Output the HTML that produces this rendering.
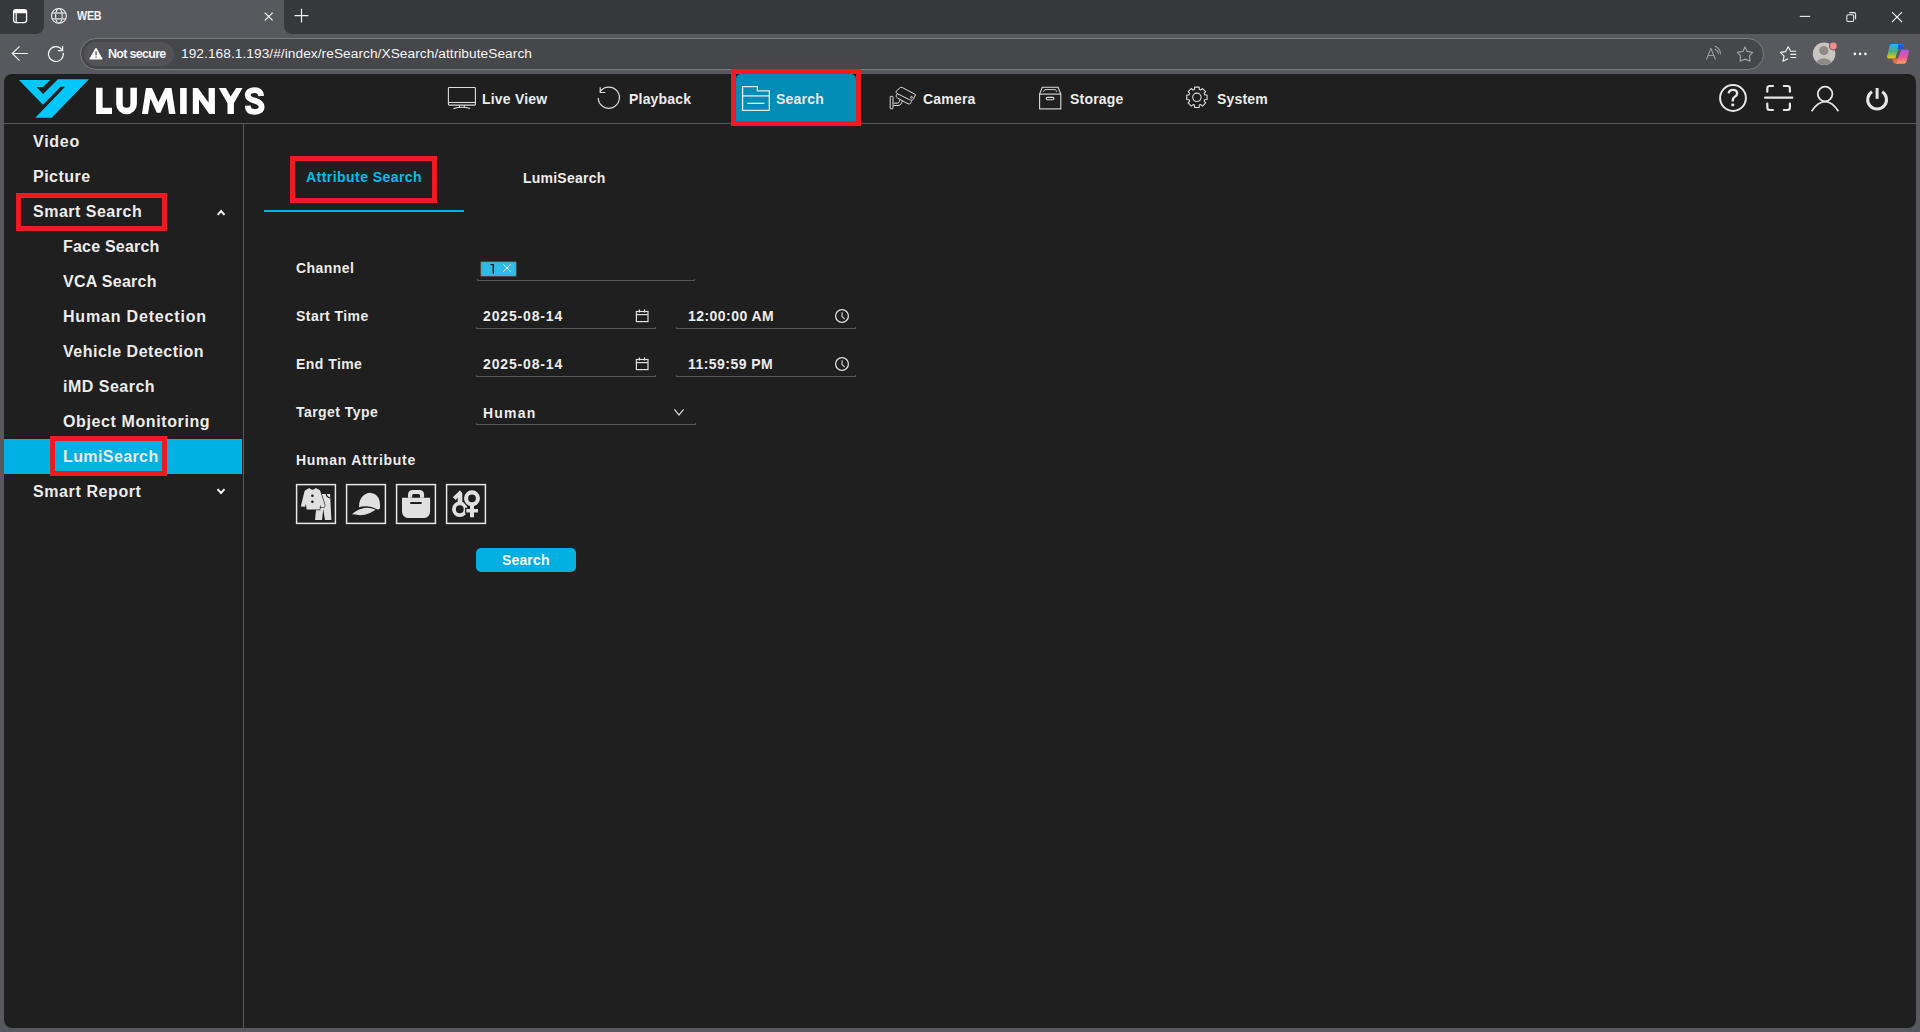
<!DOCTYPE html>
<html><head><meta charset="utf-8">
<style>
html,body{margin:0;padding:0;width:1920px;height:1032px;overflow:hidden;background:#58595e;font-family:"Liberation Sans",sans-serif;}
.a{position:absolute;}
.t{position:absolute;white-space:nowrap;line-height:1;}
.nav{font-weight:bold;font-size:14px;color:#ececec;letter-spacing:0.2px;}
.side{font-weight:bold;font-size:16px;color:#ececec;letter-spacing:0.5px;}
.lbl{font-weight:bold;font-size:14px;color:#ececec;letter-spacing:0.45px;}
.red{position:absolute;border:5px solid #ed1c24;box-sizing:border-box;}
.uline{position:absolute;height:1px;box-sizing:content-box;border:1px solid #57585b;border-top:none;border-radius:0 0 1px 1px;}
</style></head>
<body>
<!-- browser chrome -->
<div class="a" style="left:0;top:0;width:44px;height:34px;background:#37383c;border-bottom-right-radius:8px"></div>
<div class="a" style="left:284px;top:0;width:1636px;height:34px;background:#37383c;border-bottom-left-radius:8px"></div>
<div class="a" style="left:44px;top:0;width:240px;height:34px;background:#58595e;border-radius:8px 8px 0 0"></div>
<div class="t" style="left:77px;top:10px;font-size:12.5px;font-weight:bold;color:#f0f0f0;letter-spacing:-0.3px;transform:scaleX(0.86);transform-origin:0 0">WEB</div>
<!-- address bar -->
<div class="a" style="left:80px;top:38px;width:1684px;height:32px;box-sizing:border-box;background:#46474b;border:1px solid #7a7b7f;border-radius:16px"></div>
<div class="a" style="left:84px;top:42px;width:90px;height:24px;background:#525257;border-radius:12px"></div>
<div class="t" style="left:108px;top:48px;font-size:12.5px;font-weight:bold;color:#f4f4f4;letter-spacing:-0.7px">Not secure</div>
<div class="t" style="left:181px;top:47px;font-size:13.7px;color:#f4f4f4;letter-spacing:0.06px">192.168.1.193/#/index/reSearch/XSearch/attributeSearch</div>
<!-- content window -->
<div class="a" style="left:4px;top:74px;width:1912px;height:954px;background:#1f1f1f;border-radius:8px"></div>
<!-- header line & sidebar line -->
<div class="a" style="left:4px;top:123px;width:1912px;height:1px;background:#57585b"></div>
<div class="a" style="left:243px;top:124px;width:1px;height:904px;background:#57585b"></div>

<!-- active nav bg -->
<div class="a" style="left:736px;top:74px;width:120px;height:47px;background:#018db5;border-radius:5px 5px 0 0"></div>
<div class="red" style="left:731px;top:69px;width:130px;height:57px"></div>

<!-- nav texts -->
<div class="t nav" style="left:482px;top:92px">Live View</div>
<div class="t nav" style="left:629px;top:92px">Playback</div>
<div class="t nav" style="left:776px;top:92px">Search</div>
<div class="t nav" style="left:923px;top:92px">Camera</div>
<div class="t nav" style="left:1070px;top:92px">Storage</div>
<div class="t nav" style="left:1217px;top:92px">System</div>
<!-- LUMINYS -->

<!-- sidebar -->
<div class="t side" style="left:33px;top:134px;letter-spacing:0.75px">Video</div>
<div class="t side" style="left:33px;top:169px">Picture</div>
<div class="t side" style="left:33px;top:204px">Smart Search</div>
<div class="t side" style="left:63px;top:239px;letter-spacing:0.2px">Face Search</div>
<div class="t side" style="left:63px;top:274px;letter-spacing:0.28px">VCA Search</div>
<div class="t side" style="left:63px;top:309px;letter-spacing:0.82px">Human Detection</div>
<div class="t side" style="left:63px;top:344px">Vehicle Detection</div>
<div class="t side" style="left:63px;top:379px">iMD Search</div>
<div class="t side" style="left:63px;top:414px;letter-spacing:0.61px">Object Monitoring</div>
<div class="a" style="left:4px;top:439px;width:238px;height:35px;background:#00b2e3"></div>
<div class="t side" style="left:63px;top:449px;letter-spacing:0.4px">LumiSearch</div>
<div class="t side" style="left:33px;top:484px;letter-spacing:0.6px">Smart Report</div>
<div class="red" style="left:16px;top:193px;width:151px;height:38px"></div>
<div class="red" style="left:50px;top:436px;width:117px;height:40px"></div>

<!-- tabs -->
<div class="t lbl" style="left:306px;top:170px;color:#00bdee">Attribute Search</div>
<div class="t lbl" style="left:523px;top:171px;letter-spacing:0.23px">LumiSearch</div>
<div class="a" style="left:264px;top:210px;width:200px;height:2px;background:#00b2e3"></div>
<div class="red" style="left:290px;top:156px;width:147px;height:47px"></div>

<!-- form -->
<div class="t lbl" style="left:296px;top:261px">Channel</div>
<div class="t lbl" style="left:296px;top:309px">Start Time</div>
<div class="t lbl" style="left:296px;top:357px">End Time</div>
<div class="t lbl" style="left:296px;top:405px">Target Type</div>
<div class="t lbl" style="left:296px;top:453px;letter-spacing:0.72px">Human Attribute</div>

<div class="uline" style="left:477px;top:279px;width:216px"></div>
<div class="uline" style="left:476px;top:327px;width:178px"></div>
<div class="uline" style="left:676px;top:327px;width:178px"></div>
<div class="uline" style="left:476px;top:375px;width:178px"></div>
<div class="uline" style="left:676px;top:375px;width:178px"></div>
<div class="uline" style="left:476px;top:423px;width:218px"></div>


<div class="t lbl" style="left:483px;top:309px;letter-spacing:0.84px">2025-08-14</div>
<div class="t lbl" style="left:688px;top:309px">12:00:00 AM</div>
<div class="t lbl" style="left:483px;top:357px;letter-spacing:0.84px">2025-08-14</div>
<div class="t lbl" style="left:688px;top:357px">11:59:59 PM</div>
<div class="t lbl" style="left:483px;top:406px;letter-spacing:1.2px">Human</div>

<div class="a" style="left:476px;top:548px;width:100px;height:24px;background:#00b0e0;border-radius:5px"></div>
<div class="t lbl" style="left:502px;top:553px;color:#fff;letter-spacing:0.15px">Search</div>
<svg class="a" style="left:0;top:0" width="1920" height="1032" viewBox="0 0 1920 1032">
<!-- ===== browser chrome icons ===== -->
<!-- sidebar toggle -->
<rect x="13.6" y="9.6" width="13" height="13" rx="2.5" fill="none" stroke="#fff" stroke-width="1.3"/>
<rect x="13.6" y="9.6" width="13" height="3.6" rx="1.5" fill="#fff"/>
<line x1="16.2" y1="12" x2="16.2" y2="22.6" stroke="#fff" stroke-width="1.2"/>
<!-- globe -->
<g fill="none" stroke="#f0f0f0" stroke-width="1.1">
<circle cx="58.9" cy="15.9" r="7.4"/>
<ellipse cx="58.9" cy="15.9" rx="3.3" ry="7.4"/>
<line x1="51.6" y1="12.95" x2="66.2" y2="12.95" stroke="#c8c8c8" stroke-width="1.6"/>
<line x1="51.6" y1="18.9" x2="66.2" y2="18.9" stroke="#c8c8c8" stroke-width="1.6"/>
</g>
<!-- tab close -->
<path d="M264.8 12.8 L272.6 20.4 M272.6 12.8 L264.8 20.4" stroke="#f0f0f0" stroke-width="1.2"/>
<!-- new tab + -->
<path d="M301.5 8.8 V22.6 M294.6 15.7 H308.4" stroke="#f0f0f0" stroke-width="1.2"/>
<!-- window controls -->
<line x1="1799.8" y1="16.4" x2="1810.2" y2="16.4" stroke="#f0f0f0" stroke-width="1.1"/>
<rect x="1846.8" y="14.8" width="6.9" height="6.7" rx="1.2" fill="none" stroke="#f0f0f0" stroke-width="1.05"/>
<path d="M1849.2 12.6 H1854 Q1855.6 12.6 1855.6 14.2 V19.2" fill="none" stroke="#f0f0f0" stroke-width="1.05"/>
<path d="M1892 12.2 L1902 22 M1902 12.2 L1892 22" stroke="#f0f0f0" stroke-width="1.1"/>
<!-- back arrow -->
<path d="M27.9 53.5 H12.5 M19.5 46.3 L12.3 53.5 L19.5 60.7" fill="none" stroke="#f2f2f2" stroke-width="1.2"/>
<!-- refresh -->
<path d="M61.8 49.6 A7.4 7.4 0 1 0 63.2 52.8" fill="none" stroke="#f2f2f2" stroke-width="1.2"/>
<path d="M57.9 50.6 H62.6 V45.9" fill="none" stroke="#f2f2f2" stroke-width="1.2"/>
<!-- warning triangle -->
<path d="M96 48.2 L102.2 59 H89.8 Z" fill="#fff" stroke="#fff" stroke-width="1" stroke-linejoin="round"/>
<rect x="95.4" y="51.3" width="1.3" height="4" fill="#525257"/>
<rect x="95.4" y="56.4" width="1.3" height="1.3" fill="#525257"/>
<!-- read aloud A -->
<path d="M1706.4 59.6 L1710.9 48.4 L1715.5 59.6 M1708 55.5 H1713.9" fill="none" stroke="#a0a0a4" stroke-width="1.1" stroke-linejoin="round"/>
<path d="M1715.2 49.3 Q1717.9 50.8 1718.4 53.4 M1715.4 46.3 Q1720 48.6 1720.6 54" fill="none" stroke="#a0a0a4" stroke-width="1.1" stroke-linecap="round"/>
<!-- star -->
<path d="M1745 46.9 L1747.2 51.4 L1752.6 52.4 L1749.4 55.9 L1750 61.1 L1745 59.1 L1740.1 61.1 L1740.6 55.9 L1737.4 52.4 L1742.8 51.4 Z" fill="none" stroke="#a0a0a4" stroke-width="1.15" stroke-linejoin="round"/>
<!-- favorites star with lines -->
<path d="M1796.2 51.3 H1790.7 L1788.1 46.8 L1785.6 51.6 L1780.4 52.4 L1784.1 56.1 L1782.9 61.3 L1788.1 58.8" fill="none" stroke="#f2f2f2" stroke-width="1.1" stroke-linejoin="round"/>
<path d="M1790.4 54.4 H1796.2 M1790.4 57.5 H1796.2" stroke="#f2f2f2" stroke-width="1.1"/>
<!-- profile avatar -->
<circle cx="1824.1" cy="53.7" r="11.3" fill="#c9c6c2"/>
<clipPath id="avc"><circle cx="1824.1" cy="53.7" r="11.3"/></clipPath>
<g clip-path="url(#avc)" fill="#8e8a86">
<circle cx="1823.9" cy="50.6" r="4.6"/>
<ellipse cx="1823.9" cy="65.5" rx="8.2" ry="7.3"/>
</g>
<circle cx="1833.3" cy="46" r="4.4" fill="#58595e"/>
<circle cx="1833.3" cy="46" r="3.4" fill="#f38d8d"/>
<!-- more dots -->
<circle cx="1854.9" cy="53.9" r="1.3" fill="#f2f2f2"/>
<circle cx="1860.1" cy="53.9" r="1.3" fill="#f2f2f2"/>
<circle cx="1865.4" cy="53.9" r="1.3" fill="#f2f2f2"/>
<!-- copilot -->
<defs>
<linearGradient id="cpA" x1="0" y1="0" x2="0" y2="1"><stop offset="0" stop-color="#26b6f6"/><stop offset="0.5" stop-color="#48ac82"/><stop offset="1" stop-color="#f0cc12"/></linearGradient>
<linearGradient id="cpB" x1="0" y1="0" x2="0" y2="1"><stop offset="0" stop-color="#b052e6"/><stop offset="0.55" stop-color="#ea5a94"/><stop offset="1" stop-color="#fca456"/></linearGradient>
</defs>
<path d="M1891.5 44 H1902 Q1903.6 44 1904.2 49.3 H1898.2 L1895.2 58.5 H1888.6 Q1886.8 58.5 1887.1 56.5 L1889.6 46 Q1890.1 44 1891.5 44 Z" fill="url(#cpA)"/>
<path d="M1898.2 44.2 H1902 Q1903.6 44.2 1904.2 49.3 H1897.6 Z" fill="#1f55d6"/>
<path d="M1892.2 58.4 H1898.4 L1895.6 63.8 Q1893 63.8 1892.2 58.4 Z" fill="#f0663a"/>
<path d="M1901.2 49.8 H1907.6 Q1909.3 49.8 1909 51.8 L1906.3 62 Q1905.9 63.8 1904.2 63.8 H1895.9 Z" fill="url(#cpB)"/>
<!-- ===== app icons ===== -->
<!-- logo -->
<polygon fill="#00c8fd" points="18.9,80.1 50.1,80.1 42.9,86.9 36.4,87.1 43.1,93.9 57.9,79.3 88.9,79.3 51.6,117.8 35.3,117.8 46.6,106.1 65.1,86.7 60.6,86.7 42.9,104.8"/>

<!-- LUMINYS -->
<g fill="#ffffff">
<polygon points="96.1,87.8 102.6,87.8 102.6,107.8 112,107.8 112,114 96.1,114"/>
<path d="M119.45 87.8 V103.9 A7.1 7.1 0 0 0 133.65 103.9 V87.8" fill="none" stroke="#fff" stroke-width="6.5"/>
<polygon points="141.96,114 145.9,88 152,88 158.4,102.3 165.1,88 171.5,88 175.5,114 169,114 166.75,98.4 160.5,112.75 156.75,112.75 150.5,98.4 148,114"/>
<rect x="180.1" y="88" width="6.6" height="26"/>
<polygon points="192.8,114 192.8,88 198,88 208.6,102.75 208.6,88 214.9,88 214.9,114 209.25,114 199,99.6 199,114"/>
<polygon points="218.8,88 225.9,88 230.65,96.4 236.1,88 242.5,88 233.9,103.3 233.9,114 227.5,114 227.5,103.3"/>
<path d="M261.2 96 C260.8 91.8 258.3 90.1 254.6 90.1 C250.6 90.1 247.8 92 247.8 95.2 C247.8 98.6 250.8 99.6 254.6 100.6 C258.6 101.7 261.6 103.2 261.6 107 C261.6 110.3 258.6 111.9 254.6 111.9 C250.4 111.9 247.9 110 247.7 105.6" fill="none" stroke="#fff" stroke-width="5.8"/>
</g>
<!-- live view monitor -->
<g fill="none" stroke="#dcdcdc" stroke-width="1.1">
<rect x="448.4" y="87.5" width="27" height="17.6" rx="0.8"/>
<line x1="448.4" y1="102.5" x2="475.4" y2="102.5"/>
<path d="M459.5 105.5 V107.4 M464.3 105.5 V107.4"/>
<path d="M453.5 108.6 Q461.9 106 470.2 108.6"/>
</g>
<!-- playback -->
<path d="M600.1 91.6 A10.6 10.6 0 1 1 598.2 98" fill="none" stroke="#dcdcdc" stroke-width="1.2"/>
<path d="M600.2 87.2 V92.5 H605.3" fill="none" stroke="#dcdcdc" stroke-width="1.2"/>
<!-- search folder -->
<g fill="none" stroke="#e6e6e6" stroke-width="1.35">
<path d="M742.6 86.6 H757.3 V90.9 H769.3 V110.3 H742.6 Z"/>
<line x1="742.6" y1="95.9" x2="769.3" y2="95.9"/>
<line x1="747.2" y1="103.3" x2="764.4" y2="103.3"/>
</g>
<!-- camera -->
<g fill="none" stroke="#dcdcdc" stroke-width="1">
<path d="M899.2 88.5 Q900.5 86.5 902.5 87.6 L915.5 94.6 L913.5 99 Q912.5 101 910.5 100.2 L897 93.5 Q895.5 92.5 896.4 91 Z"/>
<path d="M897.3 93.6 L896.3 95.3 Q895.5 97 897.5 98 L908 103.8 Q910 104.6 910.9 102.8 L911.6 101.3"/>
<path d="M900.2 99.2 L899.2 101.8 Q898.6 103.2 897 103.2 H893.6 M902.5 100.6 L901.5 103.2 Q900.5 105.5 898 105.5 H893.6"/>
<rect x="890.2" y="96.3" width="2.8" height="12.5" rx="0.8"/>
<circle cx="911.5" cy="97.3" r="0.9"/>
</g>
<!-- storage box -->
<g fill="none" stroke="#dcdcdc" stroke-width="1.1">
<path d="M1039.6 94.1 L1042.3 87.3 H1058.1 L1060.8 94.1"/>
<rect x="1039.6" y="94.1" width="21.2" height="14.8"/>
<path d="M1043.5 91.8 L1044.8 89.6 H1055.6 L1056.9 91.8" stroke-width="0.9"/>
<rect x="1046.2" y="97.4" width="7.8" height="2.4" rx="1.2"/>
</g>
<!-- gear -->
<path fill="none" stroke="#dcdcdc" stroke-width="1.1" stroke-linejoin="round" d="M1204.73 94.88 L1207.05 95.03 L1207.05 99.57 L1204.73 99.72 L1204.15 101.13 L1205.68 102.87 L1202.47 106.08 L1200.73 104.55 L1199.32 105.13 L1199.17 107.45 L1194.63 107.45 L1194.48 105.13 L1193.07 104.55 L1191.33 106.08 L1188.12 102.87 L1189.65 101.13 L1189.07 99.72 L1186.75 99.57 L1186.75 95.03 L1189.07 94.88 L1189.65 93.47 L1188.12 91.73 L1191.33 88.52 L1193.07 90.05 L1194.48 89.47 L1194.63 87.15 L1199.17 87.15 L1199.32 89.47 L1200.73 90.05 L1202.47 88.52 L1205.68 91.73 L1204.15 93.47 Z"/>
<circle cx="1196.9" cy="97.3" r="4.2" fill="none" stroke="#dcdcdc" stroke-width="1.1"/>

<!-- help -->
<circle cx="1733" cy="98" r="12.9" fill="none" stroke="#e6e6e6" stroke-width="2"/>
<path d="M1728.8 93.4 Q1729 89.9 1733 89.9 Q1737.1 89.9 1737.1 93.4 Q1737.1 95.6 1734.8 96.8 Q1732.7 98 1732.7 100.4 V101.6" fill="none" stroke="#e6e6e6" stroke-width="2.4"/>
<rect x="1731.3" y="103.6" width="2.9" height="2.6" fill="#e6e6e6"/>
<!-- scan -->
<g fill="none" stroke="#e6e6e6" stroke-width="2.2" stroke-linecap="round">
<path d="M1767.3 91.7 V88.4 Q1767.3 86 1769.7 86 H1773"/>
<path d="M1783.8 86 H1787.5 Q1789.9 86 1789.9 88.4 V91.7"/>
<path d="M1767.3 103.7 V107.6 Q1767.3 110 1769.7 110 H1773"/>
<path d="M1783.8 110 H1787.5 Q1789.9 110 1789.9 107.6 V103.7"/>
<path d="M1765 97.7 H1792.3"/>
</g>
<!-- user -->
<circle cx="1825.1" cy="94" r="7.3" fill="none" stroke="#e6e6e6" stroke-width="1.8"/>
<path d="M1811.6 111.2 Q1818 101.6 1825.1 101.6 Q1832.2 101.6 1838.4 111.2" fill="none" stroke="#e6e6e6" stroke-width="1.8"/>
<!-- power -->
<path d="M1872 91.8 A9.4 9.4 0 1 0 1882.2 91.8" fill="none" stroke="#e6e6e6" stroke-width="3"/>
<line x1="1877.1" y1="88" x2="1877.1" y2="98.8" stroke="#e6e6e6" stroke-width="3"/>

<!-- sidebar chevrons -->
<path d="M217.7 214.9 L221.1 211 L224.5 214.9" fill="none" stroke="#f4f4f4" stroke-width="2"/>
<path d="M217.5 489.1 L221 493 L224.5 489.1" fill="none" stroke="#f4f4f4" stroke-width="2"/>

<!-- channel tag -->
<rect x="480.9" y="261.9" width="35.2" height="14.2" fill="#2ebce6" stroke="#806e6a" stroke-width="0.6"/>
<path d="M503.2 264.2 L510.8 271.8 M510.8 264.2 L503.2 271.8" stroke="#f6ecea" stroke-width="1"/>
<path d="M493.3 273.8 V264.6 H490.4" fill="none" stroke="#141414" stroke-width="1.45"/>

<!-- calendar icons -->
<g fill="none" stroke="#e0e0e0" stroke-width="1.2">
<rect x="636.4" y="311.5" width="11.6" height="10.1"/>
<line x1="636.4" y1="314.6" x2="648" y2="314.6"/>
<path d="M639.4 309.4 V312.6 M644.5 309.4 V312.6"/>
<rect x="636.4" y="359.5" width="11.6" height="10.1"/>
<line x1="636.4" y1="362.6" x2="648" y2="362.6"/>
<path d="M639.4 357.4 V360.6 M644.5 357.4 V360.6"/>
</g>
<!-- clock icons -->
<g fill="none" stroke="#e0e0e0" stroke-width="1.3">
<circle cx="842" cy="316" r="6.4"/>
<path d="M842 312.3 V316.5 L844.7 319" stroke="#bdbdbd"/>
<circle cx="842" cy="364" r="6.4"/>
<path d="M842 360.3 V364.5 L844.7 367" stroke="#bdbdbd"/>
</g>
<!-- target type chevron -->
<path d="M674.4 409.4 L679 415 L683.6 409.4" fill="none" stroke="#d6d6d6" stroke-width="1.2"/>

<!-- attribute boxes -->
<g fill="none" stroke="#e6e6e6" stroke-width="1.5">
<rect x="296.6" y="484.6" width="38.8" height="38.8"/>
<rect x="346.6" y="484.6" width="38.8" height="38.8"/>
<rect x="396.6" y="484.6" width="38.8" height="38.8"/>
<rect x="446.6" y="484.6" width="38.8" height="38.8"/>
</g>
<g fill="#e0e0e0">
<!-- clothes: pants -->
<path d="M319.5 493.9 H330.1 L331.4 519.9 H324.9 L323.3 508.9 L322 519.9 H315 L316.4 506 Z"/>
<path d="M326.2 493.8 Q326.6 497.6 330.4 497.9" fill="none" stroke="#1f1f1f" stroke-width="1.2"/>
<!-- shirt -->
<path d="M305.6 490 L309.3 488.1 Q312.4 491.6 315.8 488.1 L320 490.2 L324.8 505.2 L324.4 507 L320.8 507.3 L320.1 504.5 L319.7 509.5 H306.6 L305.9 503.5 L305.2 506.7 L300.8 506.5 L304.6 491 Z" stroke="#1f1f1f" stroke-width="1.3" paint-order="stroke"/>
<circle cx="312.4" cy="495.7" r="1.3" fill="#1f1f1f"/>
<circle cx="312.4" cy="501.7" r="1.3" fill="#1f1f1f"/>
<!-- cap -->
<path d="M359 507.2 Q358.7 499 364 495 Q368 492.6 370.8 492.9 Q376 493.5 378.5 498 Q380.4 501.6 380 508.2 Q379.2 509.8 377 509.3 Q371 506 366 506.3 Q361.5 506.4 359 507.2 Z"/>
<path d="M351.7 514.5 Q357 509.5 364 507.9 Q370 507 375.6 509.8 Q371 513.2 364.8 514.7 Q360 515.6 357 514.8 Q354 514.1 351.7 514.5 Z"/>
<!-- bag -->
<path d="M402 497.8 H430.1 V511 Q430.1 518.1 423 518.1 H409.1 Q402 518.1 402 511 Z"/>
<path d="M408 497.8 V494.9 Q408 490 413 490 H419.1 Q424.1 490 424.1 494.9 V497.8 H420 V495.6 Q420 494.1 418.5 494.1 H413.6 Q412.1 494.1 412.1 495.6 V497.8 Z"/>
</g>
<rect x="410" y="502" width="11.9" height="2" rx="1" fill="#1f1f1f"/>
<!-- gender -->
<circle cx="459.8" cy="509.25" r="5.85" fill="none" stroke="#e0e0e0" stroke-width="3.9"/>
<path d="M460 490.2 L462.3 493.3 V502.5 H457.7 V497.6 L455.8 499.9 L452.8 497.3 Z" fill="#e0e0e0"/>
<g fill="#1f1f1f" stroke="#1f1f1f" stroke-width="2.4">
<circle cx="472" cy="498.3" r="5.95" fill="none" stroke-width="6.5"/>
<path d="M466.3 509 H470 V503 H474 V509 H478 V512.6 H474 V517.2 H470 V512.6 H466.3 Z"/>
</g>
<circle cx="472" cy="498.3" r="5.95" fill="none" stroke="#e0e0e0" stroke-width="4.1"/>
<path d="M466.3 509 H470 V503 H474 V509 H478 V512.6 H474 V517.2 H470 V512.6 H466.3 Z" fill="#e0e0e0"/>
</svg>
</body></html>
